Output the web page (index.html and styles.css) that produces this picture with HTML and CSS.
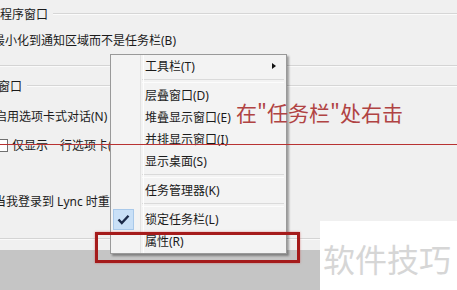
FILE: index.html
```html
<!DOCTYPE html>
<html lang="zh-CN">
<head>
    <meta charset="UTF-8">
    <meta name="viewport" content="width=device-width, initial-scale=1.0">
    <title>任务栏属性</title>
    <link rel="stylesheet" href="styles.css">
</head>
<body>
    <div class="page">
        <div class="dialog">
            <div class="group group-first">
                <span class="group-title">程序窗口</span>
                <span class="group-line"></span>
            </div>
            <div class="row row-tray">最小化到通知区域而不是任务栏(B)</div>
            <div class="divider divider-top"></div>
            <div class="group group-second">
                <span class="group-title">窗口</span>
                <span class="group-line"></span>
            </div>
            <div class="row row-tabs">启用选项卡式对话(N)</div>
            <div class="row row-check">
                <span class="checkbox"></span>
                <span>仅显示一行选项卡(O)</span>
            </div>
            <div class="row row-lync">当我登录到 Lync 时重新启动会话</div>
            <div class="divider divider-bottom"></div>
        </div>
        <div class="footer"></div>

        <div class="menu">
            <div class="menu-item">
                <span class="menu-icon"></span>
                <span class="menu-text">工具栏(T)</span>
                <span class="submenu-arrow"></span>
            </div>
            <div class="menu-sep"></div>
            <div class="menu-item">
                <span class="menu-icon"></span>
                <span class="menu-text">层叠窗口(D)</span>
            </div>
            <div class="menu-item">
                <span class="menu-icon"></span>
                <span class="menu-text">堆叠显示窗口(E)</span>
            </div>
            <div class="menu-item">
                <span class="menu-icon"></span>
                <span class="menu-text">并排显示窗口(I)</span>
            </div>
            <div class="menu-item">
                <span class="menu-icon"></span>
                <span class="menu-text">显示桌面(S)</span>
            </div>
            <div class="menu-sep"></div>
            <div class="menu-item">
                <span class="menu-icon"></span>
                <span class="menu-text">任务管理器(K)</span>
            </div>
            <div class="menu-sep"></div>
            <div class="menu-item">
                <span class="menu-icon">
                    <span class="menu-check">
                        <svg width="13" height="11" viewBox="0 0 13 11">
                            <path d="M1.5 5.5 L4.8 9 L11.5 1.8" fill="none" stroke="#1c2b4a" stroke-width="2.4"/>
                        </svg>
                    </span>
                </span>
                <span class="menu-text">锁定任务栏(L)</span>
            </div>
            <div class="menu-item">
                <span class="menu-icon"></span>
                <span class="menu-text">属性(R)</span>
            </div>
        </div>

        <div class="red-line"></div>
        <div class="note">在"任务栏"处右击</div>
        <div class="red-box"></div>
        <div class="watermark">软件技巧</div>
    </div>
</body>
</html>
```

FILE: styles.css
```css
* {
    margin: 0;
    padding: 0;
    box-sizing: border-box;
}
body {
    font-family: "Noto Sans", "Noto Sans CJK SC", sans-serif;
    font-size: 12px;
    color: #1b1b1b;
    background: #f0f0f0;
    overflow: hidden;
}
.page {
    position: relative;
    width: 457px;
    height: 290px;
    overflow: hidden;
}
.dialog {
    height: 250px;
    background: #f0f0f0;
    display: flex;
    flex-direction: column;
    white-space: nowrap;
}
.group {
    display: flex;
    align-items: center;
    gap: 5px;
}
.group-first {
    height: 28px;
}
.group-second {
    height: 38px;
    margin-left: -2px;
}
.group-line {
    flex: 1;
    height: 2px;
    border-top: 1px solid #d6d6d6;
    border-bottom: 1px solid #fbfbfb;
}
.row {
    display: flex;
    align-items: center;
    gap: 5px;
}
.row-tray {
    height: 24px;
    margin-left: -7px;
}
.row-tabs {
    height: 22px;
    margin-left: -5px;
}
.row-check {
    height: 36px;
    margin-left: -5px;
    gap: 4px;
}
.checkbox {
    width: 13px;
    height: 13px;
    border: 1px solid #707070;
    background: #fff;
}
.row-lync {
    height: 20px;
    margin-top: 28px;
    margin-left: -6px;
}
.divider {
    height: 2px;
    border-top: 1px solid #d4d4d4;
    border-bottom: 1px solid #fafafa;
}
.divider-top {
    margin-top: 13px;
}
.divider-bottom {
    margin-top: 27px;
}
.footer {
    height: 40px;
    background: #c5c5c5;
}

/* context menu */
.menu {
    position: absolute;
    left: 110px;
    top: 54px;
    width: 177px;
    height: 200px;
    background: #f3f3f3;
    border: 1px solid #999;
    box-shadow: 2px 2px 2px rgba(0, 0, 0, 0.35);
    display: flex;
    flex-direction: column;
}
.menu::before {
    content: "";
    position: absolute;
    left: 29px;
    top: 0;
    bottom: 0;
    width: 2px;
    border-left: 1px solid #e2e2e2;
    border-right: 1px solid #fdfdfd;
}
.menu-item {
    height: 22px;
    display: flex;
    align-items: center;
    position: relative;
}
.menu-icon {
    width: 30px;
    height: 22px;
    display: flex;
    align-items: center;
    padding-left: 2px;
}
.menu-text {
    margin-left: 4px;
}
.menu-check {
    width: 21px;
    height: 21px;
    background: #c9e0f7;
    border: 1px solid #a9c9ea;
    display: flex;
    align-items: center;
    justify-content: center;
}
.submenu-arrow {
    margin-left: auto;
    margin-right: 10px;
    width: 0;
    height: 0;
    border-top: 3.5px solid transparent;
    border-bottom: 3.5px solid transparent;
    border-left: 4px solid #111;
}
.menu-sep {
    height: 7px;
    margin-left: 31px;
    margin-right: 2px;
    display: flex;
    align-items: center;
}
.menu-sep::after {
    content: "";
    flex: 1;
    height: 2px;
    border-top: 1px solid #dadada;
    border-bottom: 1px solid #fcfcfc;
}

/* annotations */
.red-line {
    position: absolute;
    left: 0;
    top: 144px;
    width: 457px;
    height: 1px;
    background: #b83232;
}
.note {
    position: absolute;
    left: 236px;
    top: 98px;
    font-family: "Noto Sans CJK SC", sans-serif;
    font-size: 21px;
    line-height: 28px;
    color: #b04343;
    white-space: nowrap;
}
.red-box {
    position: absolute;
    left: 95px;
    top: 232px;
    width: 205px;
    height: 31px;
    border: 3px solid #a51b1b;
    box-shadow: 0 0 2px rgba(200, 40, 40, 0.5);
}
.watermark {
    position: absolute;
    left: 320px;
    top: 221px;
    width: 137px;
    height: 69px;
    background: #fff;
    padding-left: 3px;
    padding-top: 18px;
    font-family: "Noto Sans CJK SC", sans-serif;
    font-size: 32px;
    line-height: 38px;
    color: #d6d6d6;
    white-space: nowrap;
}
```
